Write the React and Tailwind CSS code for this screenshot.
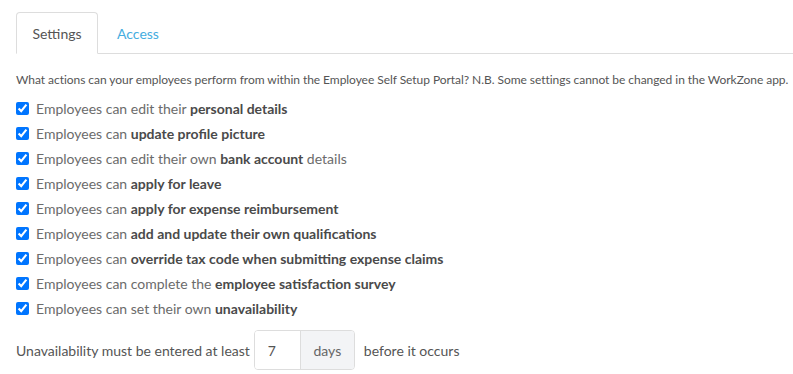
import { useState } from "react";

const OPTIONS = [
  { pre: "Employees can edit their ", bold: "personal details", post: "" },
  { pre: "Employees can ", bold: "update profile picture", post: "" },
  { pre: "Employees can edit their own ", bold: "bank account", post: " details" },
  { pre: "Employees can ", bold: "apply for leave", post: "" },
  { pre: "Employees can ", bold: "apply for expense reimbursement", post: "" },
  { pre: "Employees can ", bold: "add and update their own qualifications", post: "" },
  { pre: "Employees can ", bold: "override tax code when submitting expense claims", post: "" },
  { pre: "Employees can complete the ", bold: "employee satisfaction survey", post: "" },
  { pre: "Employees can set their own ", bold: "unavailability", post: "" },
];

export default function App() {
  const [tab, setTab] = useState("settings");
  const [days, setDays] = useState("7");

  return (
    <div className="min-h-screen bg-white pl-4 pt-3 font-['Lato',sans-serif] text-[#5a5a5a]">
      {/* Tabs */}
      <div className="flex border-b border-[#dddddd]">
        <button
          type="button"
          onClick={() => setTab("settings")}
          className="-mb-px h-[42px] w-[82px] rounded-t border border-[#dddddd] border-b-white bg-white text-[14px] text-[#555]"
        >
          Settings
        </button>
        <button
          type="button"
          onClick={() => setTab("access")}
          className="-mb-px h-[42px] px-[19px] text-[14px] text-[#45ade0]"
        >
          Access
        </button>
      </div>

      <p className="mt-[18px] whitespace-nowrap text-[12px] leading-[16px] tracking-[-0.05px] text-[#555]">
        What actions can your employees perform from within the Employee Self Setup Portal? N.B. Some settings cannot be changed in the WorkZone app.
      </p>

      <div className="mt-[8px] flex flex-col">
        {OPTIONS.map((opt) => (
          <label key={opt.bold} className="flex h-[25px] items-center gap-[7px] text-[14px] text-[#6b6b6b]">
            <input type="checkbox" defaultChecked className="m-0 h-[13px] w-[13px] accent-[#0075ff]" />
            <span>
              {opt.pre}
              <b className="font-bold text-[#4a4a4a]">{opt.bold}</b>
              {opt.post}
            </span>
          </label>
        ))}
      </div>

      <div className="mt-[9px] flex items-center text-[14px] text-[#555]">
        <span>Unavailability must be entered at least</span>
        <div className="ml-[4px] flex h-[40px] overflow-hidden rounded border border-[#dddddd]">
          <input
            value={days}
            onChange={(e) => setDays(e.target.value)}
            className="w-[45px] bg-white pl-[13px] text-[14px] text-[#555] outline-none"
          />
          <span className="flex w-[54px] items-center justify-center border-l border-[#dddddd] bg-[#f3f4f6] text-[#666]">
            days
          </span>
        </div>
        <span className="ml-[9px]">before it occurs</span>
      </div>
    </div>
  );
}
